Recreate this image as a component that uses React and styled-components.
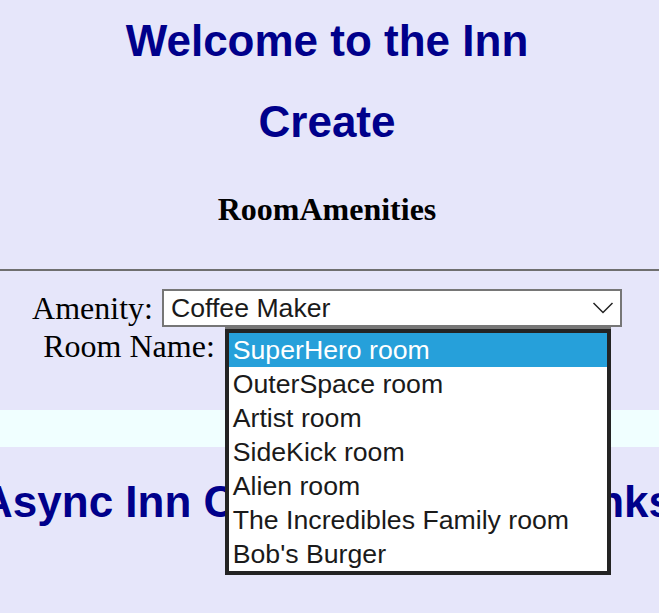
import React from 'react'
import styled, { createGlobalStyle } from 'styled-components'

const GlobalStyle = createGlobalStyle`
  html, body {
    margin: 0;
    padding: 0;
    background: #e6e6fa;
    min-height: 100%;
  }
  body {
    font-family: "Liberation Serif", "Times New Roman", serif;
    overflow: hidden;
  }
`

const Wrapper = styled.div`
  min-height: 613px;
  padding-top: 16px;
  padding-right: 5px;
`

const Title = styled.h1`
  margin: 0;
  margin-top: ${({ top = 0 }) => top}px;
  font-family: "Liberation Sans", Arial, sans-serif;
  font-size: 44px;
  line-height: 50px;
  font-weight: bold;
  color: #00008b;
  text-align: center;
  white-space: nowrap;
`

const SubTitle = styled.h4`
  margin: 44px 0 0;
  font-family: "Liberation Serif", "Times New Roman", serif;
  font-size: 32px;
  line-height: 36px;
  font-weight: bold;
  color: #000;
  text-align: center;
`

const Rule = styled.hr`
  margin: 42px -5px 0 0;
  border: 0;
  border-top: 2px solid #6f6f6f;
  height: 0;
`

const Form = styled.form`
  display: flex;
  flex-direction: column;
  margin-top: 18px;
`

const Row = styled.div`
  display: flex;
  align-items: center;
  justify-content: center;
  gap: ${({ gap = 9 }) => gap}px;
  height: 38px;
`

const Label = styled.label`
  font-family: "Liberation Serif", "Times New Roman", serif;
  font-size: 32px;
  line-height: 36px;
  color: #000;
`

const SelectBox = styled.div`
  position: relative;
  box-sizing: border-box;
  width: ${({ width }) => width}px;
  height: 38px;
  display: flex;
  align-items: center;
  justify-content: space-between;
  padding: 0 6px 0 7px;
  background: #fff;
  border: 2px solid #767676;
  font-family: "Liberation Sans", Arial, sans-serif;
  font-size: 26.67px;
  color: #1a1a1a;
`

const Chevron = () => (
  <svg width="22" height="14" viewBox="0 0 22 14">
    <path d="M1.5 2 L11 11.5 L20.5 2" fill="none" stroke="#222" strokeWidth="1.5" />
  </svg>
)

const Popup = styled.ul`
  position: absolute;
  top: 0;
  left: -2px;
  right: -2px;
  box-sizing: border-box;
  margin: 0;
  padding: 0;
  list-style: none;
  background: #fff;
  border: 4px solid #232323;
  z-index: 5;
`

const Option = styled.li`
  height: 34px;
  line-height: 34px;
  padding-left: 4px;
  font-family: "Liberation Sans", Arial, sans-serif;
  font-size: 26.67px;
  white-space: nowrap;
  color: ${({ active }) => (active ? '#fff' : '#1a1a1a')};
  background: ${({ active }) => (active ? '#26a0da' : '#fff')};
`

const Band = styled.div`
  margin: 45px -5px 0 0;
  height: 37px;
  background: #f0ffff;
`

const Footer = styled.footer`
  display: flex;
  justify-content: center;
  margin-top: 30px;
  & > h1 {
    flex-shrink: 0;
  }
`

const rooms = [
  'SuperHero room',
  'OuterSpace room',
  'Artist room',
  'SideKick room',
  'Alien room',
  'The Incredibles Family room',
  "Bob's Burger",
]

export default function App() {
  return (
    <Wrapper>
      <GlobalStyle />
      <Title>Welcome to the Inn</Title>
      <Title top={31}>Create</Title>
      <SubTitle>RoomAmenities</SubTitle>
      <Rule />
      <Form>
        <Row>
          <Label>Amenity:</Label>
          <SelectBox width={460}>
            <span>Coffee Maker</span>
            <Chevron />
          </SelectBox>
        </Row>
        <Row gap={10}>
          <Label>Room Name:</Label>
          <SelectBox width={386}>
            <span>SuperHero room</span>
            <Chevron />
            <Popup>
              {rooms.map((room, i) => (
                <Option key={room} active={i === 0}>
                  {room}
                </Option>
              ))}
            </Popup>
          </SelectBox>
        </Row>
      </Form>
      <Band />
      <Footer>
        <Title>Async Inn Complimentary Drinks</Title>
      </Footer>
    </Wrapper>
  )
}
